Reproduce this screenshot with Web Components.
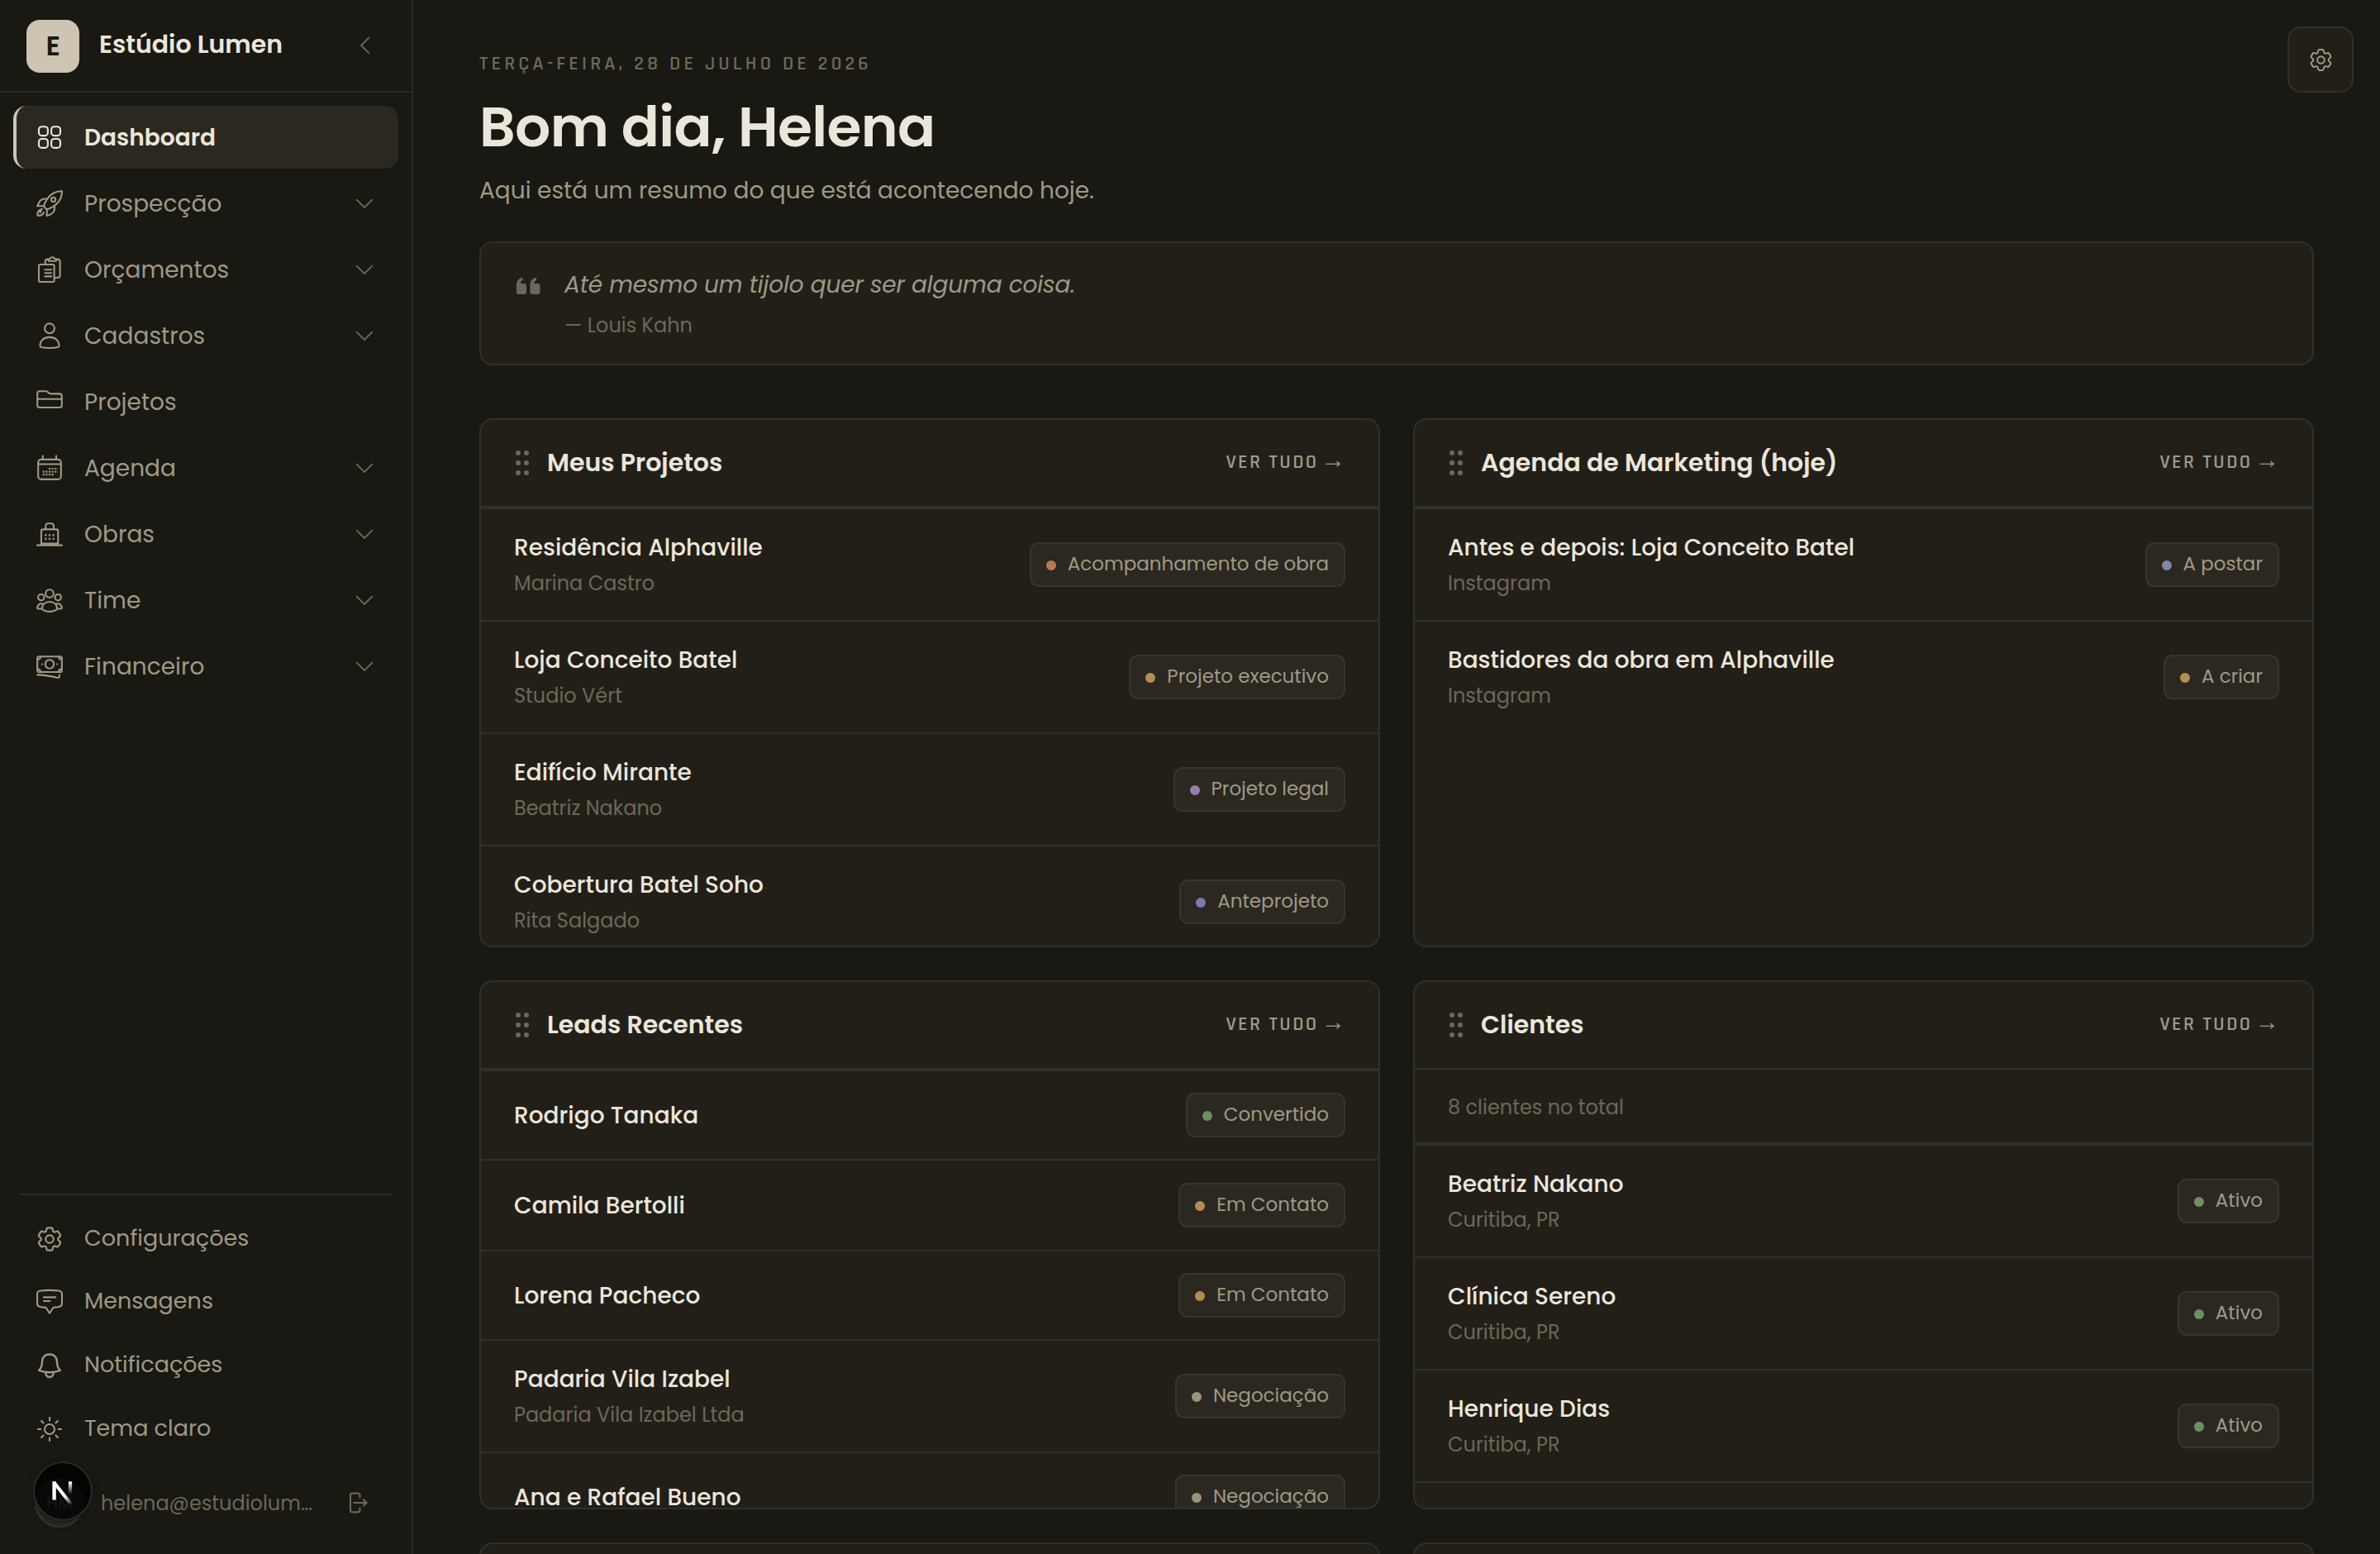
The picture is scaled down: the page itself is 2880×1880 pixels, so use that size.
<!DOCTYPE html>
<html lang="pt-BR">
<head>
<meta charset="utf-8">
<title>Estúdio Lumen</title>
<style>
  :root {
    --bg: #191812;
    --surface: #221f19;
    --raised: #2b2821;
    --line: #2b2925;
    --border: #312f2a;
    --chip-border: #38352e;
    --text: #ebe6da;
    --muted: #a09884;
    --faint: #6e6757;
    --accent: #cdc4b2;
    --label-font: Rajdhani, "Chakra Petch", Roboto, sans-serif;
  }
  html, body {
    margin: 0;
    height: 1880px;
    overflow: hidden;
    background: var(--bg);
  }
  body {
    color: var(--text);
    font-family: Poppins, Inter, "Open Sans", sans-serif;
    font-size: 28px;
  }
</style>
</head>
<body>
<lumen-app></lumen-app>

<script>
const ICONS = {
  grid: '<rect x="3" y="3.2" width="10.9" height="10.9" rx="3.6"/><rect x="18.1" y="3.2" width="10.9" height="10.9" rx="3.6"/><rect x="3" y="18" width="10.9" height="10.9" rx="3.6"/><rect x="18.1" y="18" width="10.9" height="10.9" rx="3.6"/>',
  rocket: '<path d="M31 1.2C20.5 1.2 13.5 6.500 9 18.800q1 3.400 4.500 4.500C26 18.500 31 11.500 31 1.200Z"/><circle cx="20.600" cy="11.400" r="2.600"/><path d="M13.300 10.500H10.500Q6 10.500 3.800 14L1.200 19.300H8.900M22 18.500V22.500Q22 26 18.500 28.500Q16 30.500 12.700 31V23.300M6.800 22.800Q1.200 24.500 1.200 29.500Q1.500 31.500 4 30.800Q8 30 8.800 27M6.800 22.800L4.500 27"/>',
  clipboard: '<rect x="3" y="10" width="18.600" height="21" rx="1.600"/><path d="M10.800 9.800V6.500Q10.800 3.600 13.500 3.600H14.800M24 3.600H25.600Q28.600 3.600 28.600 6.500V23Q28.600 26 25.600 26H21.800M14.800 5.800V4.600Q14.800 3.200 16.500 3Q17.300 1.200 19.400 1.200T22.300 3Q24 3.200 24 4.600V5.800ZM10.500 16.200H18M10.500 20.300H18M10.500 24.400H18"/>',
  user: '<circle cx="16" cy="7.300" r="5.900"/><path d="M4.500 28.600C4.500 22 9 17.900 16 17.900S27.500 22 27.500 28.600Q27.500 29.800 26 30Q16 32 6 30Q4.500 29.800 4.500 28.600Z"/>',
  folder: '<path d="M1.200 6Q1.200 3.200 4 3.200H11.500Q13.300 3.200 14.300 4.700T17.300 6.400H28Q30.800 6.400 30.800 9.200V20.200Q30.800 23 28 23H4Q1.200 23 1.200 20.200ZM1.200 12.800H30.800"/>',
  calendar: '<rect x="2.200" y="5.900" width="27.600" height="24" rx="3.600"/><path d="M7.800 1.600V5.900M24 1.600V5.900M2.200 11.500H29.800"/><path stroke-width="2.200" stroke-linecap="butt" stroke-dasharray="2.200 1.400" d="M14.900 17H26M7.700 20.600H26M7.700 24.200H21.300"/>',
  building: '<path d="M1 29.600H31M5.900 28.300V13Q5.900 10.400 8.500 10.400H24Q26.300 10.400 26.300 13V28.300M11.200 10.400V6.800Q11.200 3.300 14.200 3.300H17.800Q21 3.300 21 6.800V10.400"/><path stroke-width="2.600" stroke-linecap="butt" d="M5.500 27.800H26.700"/><path stroke-width="2.300" stroke-linecap="butt" stroke-dasharray="2.300 2.300" d="M10.200 17.300H22M10.200 21.800H22"/>',
  team: '<circle cx="16" cy="8" r="4.800"/><circle cx="5.800" cy="12.700" r="3.700"/><circle cx="26.200" cy="12.700" r="3.700"/><path d="M6.700 26.800C7 21.500 10.500 18 16 18S25 21.500 25.300 26.800Q22 29.900 16 29.900T6.700 26.800ZM8.500 20.800Q3 18.800 1.200 24.500Q1 26.400 2.500 26.500H6.500M23.500 20.800Q29 18.800 30.800 24.500Q31 26.400 29.500 26.500H25.500"/>',
  cash: '<rect x="1.200" y="4.300" width="29.600" height="18.700" rx="1.600"/><circle cx="16" cy="13.500" r="5.200"/><path d="M1.500 7.800Q5 7.800 5 4.600M30.500 7.800Q27 7.800 27 4.600M1.500 19.600Q5 19.600 5 22.800M30.500 19.600Q27 19.600 27 22.800M1.200 26.400C11 26.500 18 28 25 29.800Q28 30.400 28 28V26.300M6.900 13.500H7.100M24.900 13.500H25.100"/>',
  gear: '<g transform="translate(-2.240 -2.240) scale(1.520)" stroke-width="1.450"><path d="M9.594 3.940c.09-.542.56-.94 1.110-.94h2.593c.55 0 1.020.398 1.110.94l.213 1.281c.063.374.313.686.645.87.074.04.147.083.22.127.325.196.72.257 1.075.124l1.217-.456a1.125 1.125 0 0 1 1.370.49l1.296 2.247a1.125 1.125 0 0 1-.26 1.431l-1.003.827c-.293.241-.438.613-.43.992a7.723 7.723 0 0 1 0 .255c-.008.378.137.75.43.991l1.004.827c.424.35.534.955.26 1.430l-1.298 2.247a1.125 1.125 0 0 1-1.369.491l-1.217-.456c-.355-.133-.75-.072-1.076.124a6.470 6.470 0 0 1-.22.128c-.331.183-.581.495-.644.869l-.213 1.281c-.09.543-.56.94-1.110.94h-2.594c-.55 0-1.019-.398-1.110-.94l-.213-1.281c-.062-.374-.312-.686-.644-.87a6.520 6.520 0 0 1-.22-.127c-.325-.196-.72-.257-1.076-.124l-1.217.456a1.125 1.125 0 0 1-1.369-.49l-1.297-2.247a1.125 1.125 0 0 1 .26-1.431l1.004-.827c.292-.24.437-.613.43-.991a6.932 6.932 0 0 1 0-.255c.007-.38-.138-.751-.43-.992l-1.004-.827a1.125 1.125 0 0 1-.26-1.430l1.297-2.247a1.125 1.125 0 0 1 1.370-.491l1.216.456c.356.133.751.072 1.076-.124.072-.044.146-.086.22-.128.332-.183.582-.495.644-.869l.214-1.280Z"/><circle cx="12" cy="12" r="3.100"/></g>',
  message: '<path d="M5 2.500Q16 1.300 27 2.500Q31 3 31 7V17.500Q31 21.400 27 22Q24.500 22.500 21.800 22.600Q20.500 22.700 19.800 23.800L16 29.700L12.200 23.800Q11.500 22.700 10.200 22.600Q7.500 22.500 5 22Q1 21.400 1 17.500V7Q1 3 5 2.500ZM9 10.400H23.300M9 15H16.500"/>',
  bell: '<g stroke-width="2.400"><path d="M16 2.500C9.700 2.500 7 7 7 11.500C7 16.500 5.500 19.500 3.100 22Q9 24.200 16 24.200T28.900 22C26.500 19.500 25 16.500 25 11.500C25 7 22.300 2.500 16 2.500Z"/><path d="M11.200 24.500Q11.500 30 16 30T20.800 24.500"/></g>',
  sun: '<circle cx="16" cy="16" r="6"/><path d="M16 2V5.400M16 26.600V30M2 16H5.400M26.600 16H30M6.100 6.100L8.500 8.500M23.500 23.500L25.900 25.900M6.100 25.900L8.500 23.500M23.500 8.500L25.900 6.100"/>',
  logout: '<path d="M17.500 9.500V7Q17.500 4.600 15 4.600H8.500Q6 4.600 6 7V25Q6 27.400 8.500 27.400H15Q17.500 27.400 17.500 25V22.500M10 16H25.500M21.800 12.200L25.600 16L21.800 19.800"/>',
  down: '<path stroke-width="1.800" d="M6.600 11.600L16 21L25.400 11.600"/>',
  left: '<path stroke-width="1.800" d="M20.200 6.800L11 16L20.200 25.200"/>',
  quote: '<g stroke="none" fill="currentColor"><path d="M3 15C3 9.500 6 6.500 10.500 6V9.200Q8 9.800 8 13H12.300Q15 13 15 15.500V23.500Q15 26 12.300 26H5.700Q3 26 3 23.500Z"/><path d="M19.500 15C19.500 9.500 22.500 6.500 27 6V9.200Q24.500 9.800 24.500 13H29Q31.500 13 31.500 15.500V23.500Q31.500 26 29 26H22.200Q19.500 26 19.500 23.500Z"/></g>'
};

const ORANGE = '#b87a50';
const AMBER = '#b38d52';
const PURPLE = '#9a7bb0';
const BLUE = '#7a7cb0';
const SLATE = '#7e88a8';
const GREEN = '#6f8f62';
const GREY = '#9a9382';

const NAV = [
  ['grid', 'Dashboard'],
  ['rocket', 'Prospecção', true],
  ['clipboard', 'Orçamentos', true],
  ['user', 'Cadastros', true],
  ['folder', 'Projetos'],
  ['calendar', 'Agenda', true],
  ['building', 'Obras', true],
  ['team', 'Time', true],
  ['cash', 'Financeiro', true]
];

const TOOLS = [
  ['gear', 'Configurações'],
  ['message', 'Mensagens'],
  ['bell', 'Notificações'],
  ['sun', 'Tema claro']
];

// row: [title, subtitle, status, colour]
const CARDS = [
  {
    title: 'Meus Projetos',
    rows: [
      ['Residência Alphaville', 'Marina Castro', 'Acompanhamento de obra', ORANGE],
      ['Loja Conceito Batel', 'Studio Vért', 'Projeto executivo', AMBER],
      ['Edifício Mirante', 'Beatriz Nakano', 'Projeto legal', PURPLE],
      ['Cobertura Batel Soho', 'Rita Salgado', 'Anteprojeto', BLUE]
    ]
  },
  {
    title: 'Agenda de Marketing (hoje)',
    rows: [
      ['Antes e depois: Loja Conceito Batel', 'Instagram', 'A postar', SLATE],
      ['Bastidores da obra em Alphaville', 'Instagram', 'A criar', AMBER]
    ]
  },
  {
    title: 'Leads Recentes',
    rows: [
      ['Rodrigo Tanaka', '', 'Convertido', GREEN],
      ['Camila Bertolli', '', 'Em Contato', AMBER],
      ['Lorena Pacheco', '', 'Em Contato', AMBER],
      ['Padaria Vila Izabel', 'Padaria Vila Izabel Ltda', 'Negociação', GREY],
      ['Ana e Rafael Bueno', '', 'Negociação', GREY]
    ]
  },
  {
    title: 'Clientes',
    note: '8 clientes no total',
    rows: [
      ['Beatriz Nakano', 'Curitiba, PR', 'Ativo', GREEN],
      ['Clínica Sereno', 'Curitiba, PR', 'Ativo', GREEN],
      ['Henrique Dias', 'Curitiba, PR', 'Ativo', GREEN],
      []
    ]
  },
  { rows: [] },
  { rows: [] }
];

class LumenElement extends HTMLElement {
  constructor() {
    super();
    this.attachShadow({mode: 'open'});
  }

  connectedCallback() {
    this.shadowRoot.innerHTML = this.render();
  }
}

class LumenIcon extends LumenElement {
  render() {
    const size = this.getAttribute('size') || 32;
    return `
      <style>
        :host { display: block; flex: none; width: ${size}px; height: ${size}px; }
        svg { display: block; }
      </style>
      <svg width="${size}" height="${size}" viewBox="0 0 32 32" fill="none" stroke="currentColor"
        stroke-width="2.1" stroke-linecap="round" stroke-linejoin="round">${ICONS[this.getAttribute('name')]}</svg>
    `;
  }
}

class LumenNavItem extends LumenElement {
  render() {
    return `
      <style>
        :host {
          display: flex;
          align-items: center;
          box-sizing: border-box;
          height: 76px;
          padding: 0 28px 0 24px;
          border-left: 4px solid transparent;
          border-radius: 16px;
          color: var(--muted);
          font-size: 28px;
        }
        :host([active]) {
          background: var(--raised);
          border-left-color: var(--accent);
          color: var(--text);
          font-weight: 600;
        }
        :host([small]) { height: 76.7px; font-size: 27px; }
        .label { flex: 1; margin: 1px 0 0 26px; }
        :host([small]) .label { margin-top: -2px; }
        .chevron { color: var(--faint); margin-right: -3px; }
      </style>
      <lumen-icon name="${this.getAttribute('icon')}"></lumen-icon>
      <span class="label"><slot></slot></span>
      ${this.hasAttribute('expandable') ? '<lumen-icon class="chevron" name="down"></lumen-icon>' : ''}
    `;
  }
}

class LumenSidebar extends LumenElement {
  render() {
    return `
      <style>
        :host {
          display: flex;
          flex-direction: column;
          flex: none;
          box-sizing: border-box;
          width: 500px;
          height: 1880px;
          border-right: 2px solid var(--line);
        }
        header {
          display: flex;
          align-items: center;
          box-sizing: border-box;
          height: 112px;
          padding: 0 40px 0 32px;
          border-bottom: 2px solid var(--line);
        }
        .logo {
          display: grid;
          place-items: center;
          width: 64px;
          height: 64px;
          margin-top: 2px;
          border-radius: 16px;
          background: var(--accent);
          color: #1b1a14;
          font: 700 36px var(--label-font);
        }
        .brand { flex: 1; margin: -2px 0 0 24px; font-size: 30px; font-weight: 600; }
        .collapse { color: var(--faint); }
        nav { display: flex; flex-direction: column; gap: 4px; padding: 16px 16px 0; }
        .tools { margin-top: auto; padding: 0 16px; }
        .rule { height: 2px; margin: 0 8px 14px; background: var(--line); }
        footer {
          display: flex;
          align-items: center;
          height: 60px;
          margin: 21px 26px 32px;
          padding-left: 16px;
          color: var(--faint);
          font-size: 24px;
        }
        .avatar {
          display: grid;
          place-items: center;
          box-sizing: border-box;
          width: 60px;
          height: 60px;
          border: 2px solid var(--chip-border);
          border-radius: 50%;
          background: var(--raised);
          font-size: 20px;
          font-weight: 500;
        }
        .mail { flex: 1; margin-left: 20px; }
        .exit { margin-right: 22px; }
      </style>
      <header>
        <div class="logo">E</div>
        <div class="brand">Estúdio Lumen</div>
        <lumen-icon class="collapse" name="left"></lumen-icon>
      </header>
      <nav>
        ${NAV.map(([icon, label, more], i) => `
          <lumen-nav-item icon="${icon}" ${more ? 'expandable' : ''} ${i ? '' : 'active'}>${label}</lumen-nav-item>`).join('')}
      </nav>
      <div class="tools">
        <div class="rule"></div>
        ${TOOLS.map(([icon, label]) => `
          <lumen-nav-item small icon="${icon}">${label}</lumen-nav-item>`).join('')}
      </div>
      <footer>
        <div class="avatar">HM</div>
        <div class="mail">helena@estudiolum…</div>
        <lumen-icon class="exit" name="logout"></lumen-icon>
      </footer>
    `;
  }
}

class LumenBadge extends LumenElement {
  render() {
    return `
      <style>
        :host {
          display: flex;
          align-items: center;
          gap: 14px;
          box-sizing: border-box;
          height: 54px;
          padding: 0 18px;
          border: 2px solid var(--chip-border);
          border-radius: 11px;
          background: var(--raised);
          color: var(--muted);
          font-size: 23px;
          white-space: nowrap;
        }
        .dot {
          width: 12px;
          height: 12px;
          margin-top: 2px;
          border-radius: 50%;
          background: ${this.getAttribute('color')};
        }
        .label { margin-top: -2px; }
      </style>
      <span class="dot"></span>
      <span class="label"><slot></slot></span>
    `;
  }
}

class LumenRow extends LumenElement {
  render() {
    return `
      <style>
        :host {
          display: flex;
          align-items: center;
          justify-content: space-between;
          flex: none;
          box-sizing: border-box;
          height: 136px;
          padding: 0 40px;
          border-top: 2px solid var(--border);
        }
        :host([compact]) { height: 108px; }
        :host([compact]:nth-of-type(even)) { height: 110px; }
        .title, .sub { line-height: 43px; }
        .title { font-size: 28px; font-weight: 500; }
        .sub { margin-bottom: -2px; color: var(--faint); font-size: 24px; }
      </style>
      <div>
        <div class="title"><slot></slot></div>
        ${this.hasAttribute('compact') ? '' : '<div class="sub"><slot name="sub"></slot></div>'}
      </div>
      <slot name="status"></slot>
    `;
  }
}

class LumenCard extends LumenElement {
  render() {
    return `
      <style>
        :host {
          display: flex;
          flex-direction: column;
          box-sizing: border-box;
          height: 640px;
          overflow: hidden;
          border: 2px solid var(--border);
          border-radius: 16px;
          background: var(--surface);
        }
        header {
          display: flex;
          align-items: center;
          flex: none;
          height: 104px;
          padding: 0 40px;
          border-bottom: 2px solid var(--border);
        }
        .grip {
          display: grid;
          grid-template-columns: 6px 6px;
          gap: 6px 4px;
          margin: 0 22px 0 2px;
        }
        .grip i { width: 6px; height: 6px; border-radius: 50%; background: var(--faint); }
        .title { flex: 1; font-size: 30px; font-weight: 600; }
        .all {
          display: flex;
          align-items: baseline;
          gap: 3px;
          color: var(--muted);
          font: 600 24px/30px var(--label-font);
          letter-spacing: .1em;
          margin-top: -2px;
        }
        .arrow {
          font: 400 29.5px/0 "Liberation Sans", Arial, sans-serif;
          letter-spacing: 0;
        }
      </style>
      ${this.hasAttribute('empty') ? '' : `
        <header>
          <span class="grip"><i></i><i></i><i></i><i></i><i></i><i></i></span>
          <span class="title"><slot name="title"></slot></span>
          <span class="all">VER TUDO<span class="arrow">→</span></span>
        </header>`}
      <slot></slot>
    `;
  }
}

class LumenQuote extends LumenElement {
  render() {
    return `
      <style>
        :host {
          display: flex;
          box-sizing: border-box;
          height: 150px;
          padding: 30px 40px;
          border: 2px solid var(--border);
          border-radius: 16px;
          background: var(--surface);
        }
        lumen-icon { color: var(--faint); margin-top: 6px; }
        .body { margin-left: 29px; }
        .text {
          line-height: 41px;
          color: var(--muted);
          font-size: 28px;
          font-style: italic;
          letter-spacing: -.16px;
        }
        .author { line-height: 35px; margin-top: 11px; color: var(--faint); font-size: 24px; }
      </style>
      <lumen-icon name="quote"></lumen-icon>
      <div class="body">
        <div class="text"><slot></slot></div>
        <div class="author"><slot name="author"></slot></div>
      </div>
    `;
  }
}

class LumenDashboard extends LumenElement {
  row([title, sub, status, color]) {
    if(!title)
      return '<lumen-row></lumen-row>';
    return `
      <lumen-row ${sub ? '' : 'compact'}>
        ${title}
        ${sub ? `<span slot="sub">${sub}</span>` : ''}
        <lumen-badge slot="status" color="${color}">${status}</lumen-badge>
      </lumen-row>`;
  }

  card({title, note, rows}) {
    if(!title)
      return '<lumen-card empty></lumen-card>';
    return `
      <lumen-card>
        <span slot="title">${title}</span>
        ${note ? `<div class="note">${note}</div>` : ''}
        ${rows.map(row => this.row(row)).join('')}
      </lumen-card>`;
  }

  render() {
    return `
      <style>
        :host {
          display: block;
          flex: 1;
          box-sizing: border-box;
          height: 1880px;
          overflow: hidden;
          padding: 62px 80px 0;
        }
        .date {
          line-height: 30px;
          color: var(--faint);
          font-family: var(--label-font);
          font-size: 24px;
          font-weight: 600;
          letter-spacing: 4.13px;
        }
        h1 {
          margin: 20px 0 0;
          line-height: 84px;
          font-size: 68px;
          font-weight: 600;
          letter-spacing: -.01em;
        }
        .lead { margin: 14px 0 41px; line-height: 41px; color: var(--muted); }
        .cards {
          display: grid;
          grid-template-columns: 1fr 1fr;
          gap: 40px;
          margin-top: 64px;
        }
        .note {
          flex: none;
          line-height: 85px;
          padding: 3px 40px 0;
          border-bottom: 2px solid var(--border);
          color: var(--faint);
          font-size: 24px;
        }
      </style>
      <div class="date">TERÇA-FEIRA, 28 DE JULHO DE 2026</div>
      <h1>Bom dia, Helena</h1>
      <div class="lead">Aqui está um resumo do que está acontecendo hoje.</div>
      <lumen-quote>
        Até mesmo um tijolo quer ser alguma coisa.
        <span slot="author">— Louis Kahn</span>
      </lumen-quote>
      <div class="cards">${CARDS.map(card => this.card(card)).join('')}</div>
    `;
  }
}

class LumenApp extends LumenElement {
  render() {
    return `
      <style>
        :host { display: flex; position: relative; width: 2880px; height: 1880px; overflow: hidden; }
        .settings, .dev {
          position: absolute;
          display: grid;
          place-items: center;
          box-sizing: border-box;
        }
        .settings {
          top: 32px;
          right: 32px;
          width: 80px;
          height: 80px;
          border: 2px solid var(--border);
          border-radius: 16px;
          background: var(--surface);
          color: var(--muted);
        }
        .dev {
          left: 40px;
          top: 1768px;
          width: 72px;
          height: 72px;
          border: 2px solid #2a2a29;
          border-radius: 50%;
          background: rgba(0, 0, 0, .8);
          background-clip: padding-box;
          box-shadow: 0 0 0 1px #14130f, 0 4px 12px rgba(0, 0, 0, .2);
        }
      </style>
      <lumen-sidebar></lumen-sidebar>
      <lumen-dashboard></lumen-dashboard>
      <div class="settings"><lumen-icon name="gear" size="29"></lumen-icon></div>
      <div class="dev">
        <svg width="32" height="32" viewBox="0 0 32 32" fill="none">
          <defs>
            <linearGradient id="diagonal" gradientUnits="userSpaceOnUse" x1="19" y1="22" x2="27" y2="32">
              <stop stop-color="#fff"/><stop offset="1" stop-color="#fff" stop-opacity="0"/>
            </linearGradient>
            <linearGradient id="stem" gradientUnits="userSpaceOnUse" x1="0" y1="5" x2="0" y2="20">
              <stop stop-color="#fff"/><stop offset="1" stop-color="#fff" stop-opacity="0"/>
            </linearGradient>
          </defs>
          <path stroke="#fff" stroke-width="4.400" d="M5.600 26.500V4.300"/>
          <path stroke="url(#diagonal)" stroke-width="4" d="M5.200 5.200L26.200 32"/>
          <path stroke="url(#stem)" stroke-width="4.200" d="M25 4.300V20"/>
        </svg>
      </div>
    `;
  }
}

customElements.define('lumen-app', LumenApp);
customElements.define('lumen-sidebar', LumenSidebar);
customElements.define('lumen-dashboard', LumenDashboard);
customElements.define('lumen-nav-item', LumenNavItem);
customElements.define('lumen-quote', LumenQuote);
customElements.define('lumen-card', LumenCard);
customElements.define('lumen-row', LumenRow);
customElements.define('lumen-badge', LumenBadge);
customElements.define('lumen-icon', LumenIcon);
</script>
</body>
</html>
